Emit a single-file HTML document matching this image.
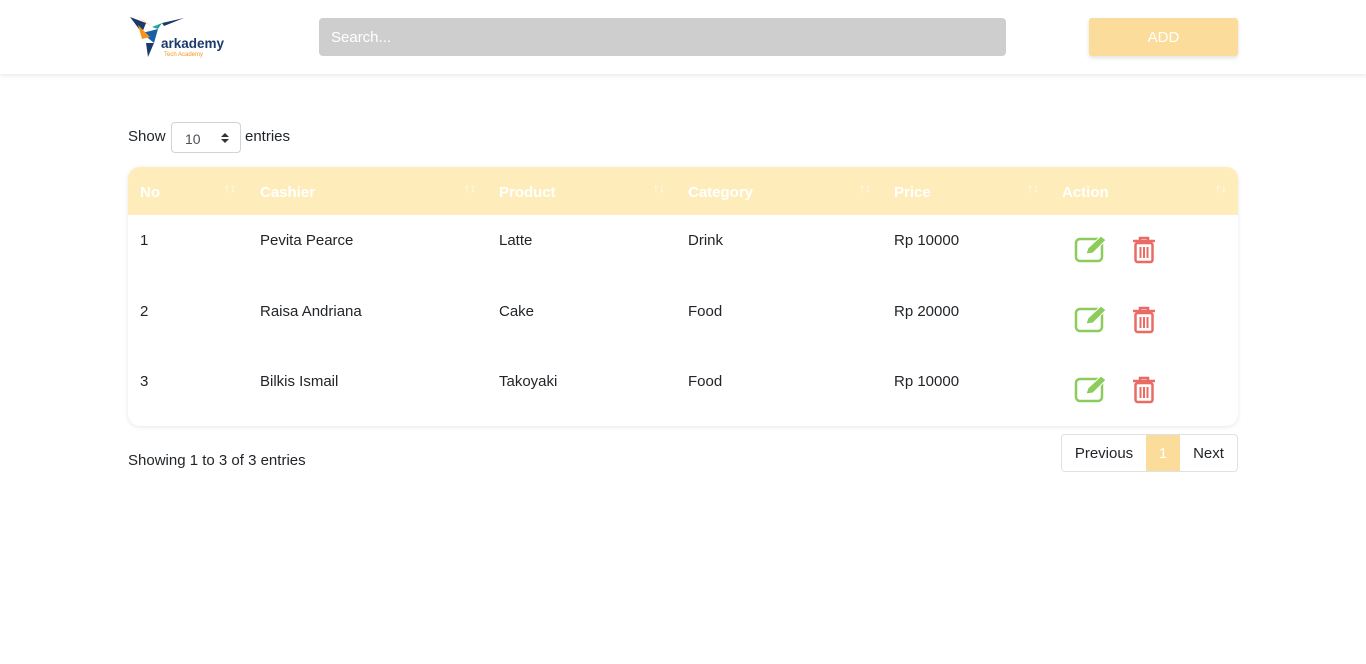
<!DOCTYPE html>
<html><head><meta charset="utf-8"><style>
*{box-sizing:border-box;margin:0;padding:0}
body{width:1366px;height:664px;background:#fff;font-family:"Liberation Sans",sans-serif;color:#212529;font-size:15px;overflow:hidden;position:relative}
.nav{position:absolute;left:0;top:0;width:1366px;height:74px;background:#fff;box-shadow:0 2px 4px rgba(0,0,0,.08)}
.search{position:absolute;left:319px;top:18px;width:687px;height:38px;background:#cecece;border-radius:4px;color:#fff;font-size:15px;padding:11px 12px}
.add{position:absolute;left:1089px;top:18px;width:149px;height:38px;background:#fbdc9a;border-radius:3px;color:#fff;text-align:center;line-height:40px;font-size:15px;box-shadow:0 2px 4px rgba(0,0,0,.12)}
.show{position:absolute;left:128px;top:128px;font-size:15px}
.sel{position:absolute;left:171px;top:122px;width:70px;height:31px;border:1px solid #ced4da;border-radius:4px;font-size:14px;padding:8px 13px;color:#495057}
.card{position:absolute;left:128px;top:167px;width:1110px;height:259px;border-radius:12px;box-shadow:0 1px 5px rgba(0,0,0,.1);overflow:hidden}
.head{height:48px;background:#feedbb;position:relative}
.head span{position:absolute;top:17px;color:#fff;font-weight:bold;font-size:15px}
.head i{position:absolute;top:14px;color:#fff;font-style:normal;font-size:12px;opacity:.8}
.row{position:absolute;left:0;width:1110px;font-size:15px}
.row span{position:absolute;top:0}
.ic{position:absolute}
.info{position:absolute;left:128px;top:452px;font-size:15px}
.pg{position:absolute;left:1061px;top:434px;width:177px;height:38px;display:flex;border:1px solid #dee2e6;border-radius:4px;overflow:hidden;font-size:15px}
.pg div{line-height:38px;text-align:center}
</style></head><body>
<div class="nav">
<svg style="position:absolute;left:128px;top:13px" width="100" height="46" viewBox="0 0 100 46">
<polygon points="2,4 18,10 14,20" fill="#1b3a6b"/><polygon points="8,2 24,14 18,10" fill="#f7941d"/>
<polygon points="14,20 30,16 26,30" fill="#1b5ea8"/><polygon points="24,14 34,10 30,16" fill="#26a69a"/>
<polygon points="34,10 56,5 36,13" fill="#1b3a6b"/><polygon points="18,30 26,30 20,44" fill="#1b3a6b"/>
<polygon points="10,12 22,24 14,26" fill="#f7941d"/>
<text x="33" y="35" font-family="Liberation Sans" font-weight="bold" font-size="13.5" fill="#1b3a6b">arkademy</text>
<text x="36" y="43" font-family="Liberation Sans" font-size="6" fill="#f7941d">Tech Academy</text>
</svg>
<div class="search">Search...</div>
<div class="add">ADD</div>
</div>
<div class="show">Show</div><div class="sel">10<svg style="position:absolute;right:11px;top:9px" width="8" height="12" viewBox="0 0 8 12"><path d="M0 5 L4 1 L8 5 Z M0 7 L4 11 L8 7 Z" fill="#333"/></svg></div>
<div class="show" style="left:245px">entries</div>
<div class="card">
<div class="head">
<span style="left:12px">No</span><i style="left:96px">↑↓</i>
<span style="left:132px">Cashier</span><i style="left:336px">↑↓</i>
<span style="left:371px">Product</span><i style="left:525px">↑↓</i>
<span style="left:560px">Category</span><i style="left:731px">↑↓</i>
<span style="left:766px">Price</span><i style="left:899px">↑↓</i>
<span style="left:934px">Action</span><i style="left:1087px">↑↓</i>
</div>
</div>
<div class="row" style="left:128px;top:232px"><span style="left:12px">1</span><span style="left:132px">Pevita Pearce</span><span style="left:371px">Latte</span><span style="left:560px">Drink</span><span style="left:766px">Rp 10000</span></div>
<div class="row" style="left:128px;top:303px"><span style="left:12px">2</span><span style="left:132px">Raisa Andriana</span><span style="left:371px">Cake</span><span style="left:560px">Food</span><span style="left:766px">Rp 20000</span></div>
<div class="row" style="left:128px;top:373px"><span style="left:12px">3</span><span style="left:132px">Bilkis Ismail</span><span style="left:371px">Takoyaki</span><span style="left:560px">Food</span><span style="left:766px">Rp 10000</span></div>
<svg class="ic" style="left:1074px;top:234px" width="36" height="30" viewBox="0 0 36 30"><rect x="2" y="5" width="26" height="22" rx="4" fill="none" stroke="#8ccc5b" stroke-width="2.5"/><path d="M12 20 L14 14 L27 2 L32 6 L19 19 Z" fill="#8ccc5b" stroke="#fff" stroke-width="1"/></svg>
<svg class="ic" style="left:1131px;top:235px" width="26" height="30" viewBox="0 0 26 30"><path d="M2 6 H24 M9 6 V3 H17 V6" fill="none" stroke="#ea6b63" stroke-width="2.5"/><rect x="4.5" y="8" width="17" height="19" rx="2" fill="none" stroke="#ea6b63" stroke-width="2.5"/><path d="M9.5 12 V23 M13 12 V23 M16.5 12 V23" stroke="#ea6b63" stroke-width="2"/></svg>
<svg class="ic" style="left:1074px;top:304px" width="36" height="30" viewBox="0 0 36 30"><rect x="2" y="5" width="26" height="22" rx="4" fill="none" stroke="#8ccc5b" stroke-width="2.5"/><path d="M12 20 L14 14 L27 2 L32 6 L19 19 Z" fill="#8ccc5b" stroke="#fff" stroke-width="1"/></svg>
<svg class="ic" style="left:1131px;top:305px" width="26" height="30" viewBox="0 0 26 30"><path d="M2 6 H24 M9 6 V3 H17 V6" fill="none" stroke="#ea6b63" stroke-width="2.5"/><rect x="4.5" y="8" width="17" height="19" rx="2" fill="none" stroke="#ea6b63" stroke-width="2.5"/><path d="M9.5 12 V23 M13 12 V23 M16.5 12 V23" stroke="#ea6b63" stroke-width="2"/></svg>
<svg class="ic" style="left:1074px;top:374px" width="36" height="30" viewBox="0 0 36 30"><rect x="2" y="5" width="26" height="22" rx="4" fill="none" stroke="#8ccc5b" stroke-width="2.5"/><path d="M12 20 L14 14 L27 2 L32 6 L19 19 Z" fill="#8ccc5b" stroke="#fff" stroke-width="1"/></svg>
<svg class="ic" style="left:1131px;top:375px" width="26" height="30" viewBox="0 0 26 30"><path d="M2 6 H24 M9 6 V3 H17 V6" fill="none" stroke="#ea6b63" stroke-width="2.5"/><rect x="4.5" y="8" width="17" height="19" rx="2" fill="none" stroke="#ea6b63" stroke-width="2.5"/><path d="M9.5 12 V23 M13 12 V23 M16.5 12 V23" stroke="#ea6b63" stroke-width="2"/></svg>
<div class="info">Showing 1 to 3 of 3 entries</div>
<div class="pg"><div style="width:84px">Previous</div><div style="width:34px;background:#fbdc9a;color:#fff">1</div><div style="width:57px">Next</div></div>
</body></html>
